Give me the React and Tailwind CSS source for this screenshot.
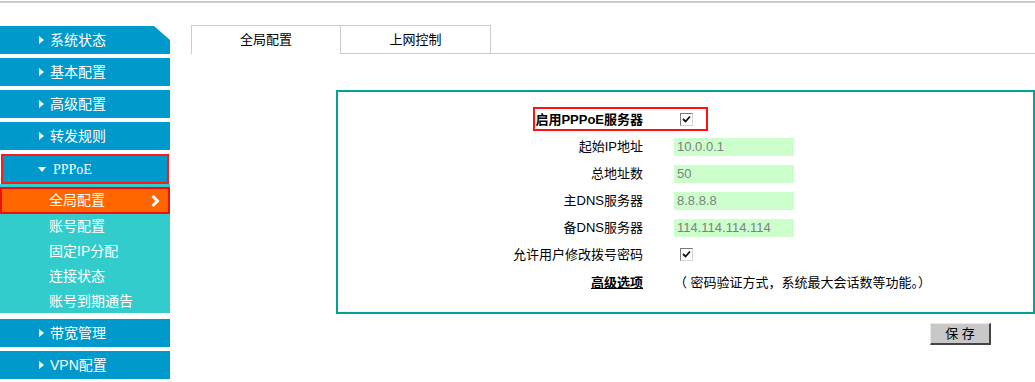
import React from "react";

const cjk = { fontFamily: '"Liberation Sans", "Noto Sans CJK SC", sans-serif' };

// ─── Sidebar pieces ──────────────────────────────────────────────────────────
function Arrow() {
  return (
    <svg width="5" height="8" viewBox="0 0 5 8" className="mr-[6px] shrink-0">
      <path d="M0 0 L5 4 L0 8 Z" fill="#ffffff" />
    </svg>
  );
}

function MenuItem({ label, first }) {
  return (
    <div
      className="h-[28px] w-[170px] bg-[#0099cc] flex items-center pl-[39px] text-white text-[14px]"
      style={first ? { clipPath: "polygon(0 0, 154px 0, 170px 14px, 170px 100%, 0 100%)" } : undefined}
    >
      <Arrow />
      <span>{label}</span>
    </div>
  );
}

function SubItem({ label }) {
  return (
    <div className="h-[25px] flex items-center pl-[49px] text-white text-[14px]">{label}</div>
  );
}

function Sidebar() {
  return (
    <div className="w-[170px] shrink-0 pt-[23px] flex flex-col">
      <div className="flex flex-col gap-[4px]">
        <MenuItem label="系统状态" first />
        <MenuItem label="基本配置" />
        <MenuItem label="高级配置" />
        <MenuItem label="转发规则" />
      </div>
      <div className="mt-[4px] h-[30px] w-[168px] ml-[1px] bg-[#0099cc] border-2 border-[#ff1a1a] flex items-center pl-[35px] text-white">
        <svg width="8" height="5" viewBox="0 0 8 5" className="mr-[7px]">
          <path d="M0 0 L8 0 L4 5 Z" fill="#ffffff" />
        </svg>
        <span className="text-[14px]" style={{ fontFamily: '"Liberation Serif", serif' }}>PPPoE</span>
      </div>
      <div className="bg-[#33cccc] pt-[3px] h-[129px]">
        <div className="h-[27px] bg-[#ff6600] border-2 border-[#ee1111] flex items-center justify-between pl-[47px] pr-[8px] text-white text-[14px]">
          <span>全局配置</span>
          <svg width="9" height="12" viewBox="0 0 9 12">
            <path d="M1.5 1 L6.5 6 L1.5 11" stroke="#ffffff" strokeWidth="3" fill="none" />
          </svg>
        </div>
        <SubItem label="账号配置" />
        <SubItem label="固定IP分配" />
        <SubItem label="连接状态" />
        <SubItem label="账号到期通告" />
      </div>
      <div className="mt-[6px] flex flex-col gap-[4px]">
        <MenuItem label="带宽管理" />
        <MenuItem label="VPN配置" />
      </div>
    </div>
  );
}

// ─── Form pieces ─────────────────────────────────────────────────────────────
function Check() {
  return (
    <span className="w-[13px] h-[13px] bg-white border border-t-[#7a7a7a] border-l-[#7a7a7a] border-b-[#d4d4d4] border-r-[#d4d4d4] flex items-center justify-center ml-[6px]">
      <svg width="9" height="9" viewBox="0 0 9 9">
        <path d="M1 4 L3.5 6.5 L8 1.5" stroke="#111111" strokeWidth="1.8" fill="none" />
      </svg>
    </span>
  );
}

function Field({ value }) {
  return (
    <span className="w-[120px] h-[18px] bg-[#ccffcc] text-[#808080] text-[13px] pl-[3px] flex items-center">
      {value}
    </span>
  );
}

function Row({ label, children, bold }) {
  return (
    <div className="h-[27px] flex items-center">
      <div className={`w-[305px] text-right text-[13px] text-black ${bold ? "font-bold" : ""}`}>{label}</div>
      <div className="ml-[31px] flex items-center">{children}</div>
    </div>
  );
}

// ─── Main ────────────────────────────────────────────────────────────────────
export default function App() {
  return (
    <div className="w-[1035px] h-[382px] bg-white overflow-hidden" style={cjk}>
      <div className="h-px bg-white" />
      <div className="h-[2px] bg-[#cccccc]" />

      <div className="flex">
        <Sidebar />

        <div className="flex-1 pt-[22px]">
          {/* Tabs */}
          <div className="flex h-[29px] pl-[21px]">
            <div className="w-[150px] border-t border-l border-r border-[#cccccc] flex items-center justify-center text-[13px] text-black">
              全局配置
            </div>
            <div className="w-[150px] border-t border-r border-b border-[#cccccc] flex items-center justify-center text-[13px] text-black">
              上网控制
            </div>
            <div className="flex-1 border-b border-[#cccccc]" />
          </div>

          {/* Panel */}
          <div className="ml-[166px] mt-[36px] h-[224px] border-2 border-[#00a39b] pt-[14px] relative">
            <div className="absolute left-[195px] top-[15px] w-[175px] h-[24px] border-2 border-[#ff1111]" />
            <Row label="启用PPPoE服务器" bold>
              <Check />
            </Row>
            <Row label="起始IP地址">
              <Field value="10.0.0.1" />
            </Row>
            <Row label="总地址数">
              <Field value="50" />
            </Row>
            <Row label="主DNS服务器">
              <Field value="8.8.8.8" />
            </Row>
            <Row label="备DNS服务器">
              <Field value="114.114.114.114" />
            </Row>
            <Row label="允许用户修改拨号密码">
              <Check />
            </Row>
            <div className="h-[29px] flex items-center">
              <div className="w-[305px] text-right text-[13px] text-black font-bold underline">高级选项</div>
              <div className="ml-[31px] text-[13px] text-black">（ 密码验证方式，系统最大会话数等功能。）</div>
            </div>
          </div>

          {/* Save */}
          <div className="flex justify-end pr-[44px] mt-[9px]">
            <button className="w-[61px] h-[22px] bg-[#c8c8c8] border-t border-l border-t-[#e8e8e8] border-l-[#e8e8e8] border-b-2 border-r-2 border-b-[#444444] border-r-[#444444] text-[13px] text-black flex items-center justify-center">
              保 存
            </button>
          </div>
        </div>
      </div>
    </div>
  );
}
